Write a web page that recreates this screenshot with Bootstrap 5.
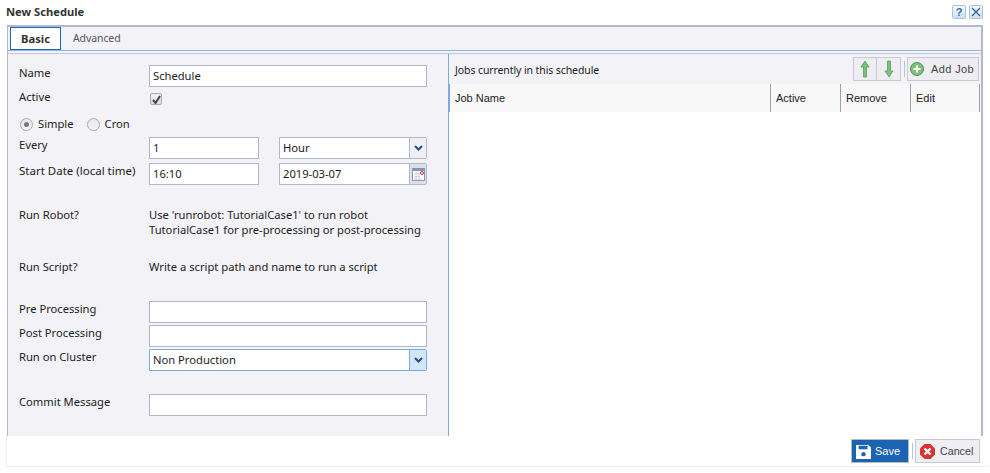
<!DOCTYPE html>
<html lang="en"><head><meta charset="utf-8"><title>New Schedule</title>
<link href="https://cdn.jsdelivr.net/npm/bootstrap@5.3.0/dist/css/bootstrap.min.css" rel="stylesheet">
<style>
html,body{height:473px;overflow:hidden;background:#fff}
body{font:11.2px/16px "Noto Sans","Open Sans",sans-serif;color:#1c1c1c;}
.dlg{height:473px;padding:0 7px 6px 7px;width:990px}
.dlg-head{height:25px;padding-top:4px}
.dlg-title{font-weight:700;font-size:11.2px;color:#333;margin-left:-1px}
.hbtn{width:14px;height:14px;margin-top:1px;border:1px solid #a9c2de;background:linear-gradient(#f3f8fd,#cfe2f5);border-radius:2px;margin-left:3px;display:flex;align-items:center;justify-content:center;color:#2e6da4;font:700 11px/1 "Liberation Sans",sans-serif}
.frame{height:411px;border:1px solid #b4b8d0;border-bottom:0;background:#f2f2f7;border-top-width:2px;border-right-width:2px;overflow:hidden}
.tabbar{height:24px;border-bottom:1px solid #8db4e2;box-shadow:0 2px 0 #f2f2f7,0 3px 0 #c3c6da;padding:0 0 0 2px;gap:12px;flex:none}
.tab1{height:23px;width:51px;border:1px solid #1b6ab5;background:#fff;font-weight:700;text-align:center;line-height:21px;color:#333;font-size:11.2px}
.tab2{line-height:23px;color:#555;font-size:10.5px;letter-spacing:-.1px}
.panes{height:384px;margin-top:3px}
.leftp{width:441px;flex:none;border-right:1px solid #7fa9dc;padding:11px 0 0 11px}
.frow{display:flex;margin-bottom:2px;height:22px}
.frow .lb{width:130px;flex:none}
.wide{font-size:11.5px}
.finp{height:22px;border:1px solid #b3b6cf;background:#fff;padding:0 3px;line-height:20px;overflow:hidden}
.w278{width:278px}.w110{width:110px}.w148{width:148px}
.g20{gap:20px;display:flex}
.sel{display:flex;height:22px;border:1px solid #b3b6cf;background:#fff;border-radius:0 2px 2px 0}
.sel>span{flex:1;padding:0 3px;line-height:20px}
.arr{width:17px;border-left:1px solid #b3b6cf;background:#eef0f6;display:flex;align-items:center;justify-content:center;flex:none}
.arr.cal{background:#dcdee8}
.sel.on{border-color:#7fa9dc}.sel.on .arr{background:#d2e6fa;border-left-color:#7fa9dc}
.chk{width:12px;height:12px;border:1px solid #aaa;border-radius:2px;background:linear-gradient(#f2f2f2,#dcdcdc);margin:4px 0 0 1px;display:flex;align-items:center;justify-content:center}
.rad{width:13px;height:13px;border:1px solid #aaa;border-radius:50%;background:linear-gradient(#e6e6e6,#f6f6f6);display:inline-block;position:relative}
.rad.on::after{content:"";position:absolute;inset:3px;border-radius:50%;background:#777}
.radios{height:24px;padding:0 0 2px 1px;gap:5px}
.rad-gap{margin-right:8px}
.tight{margin-bottom:4px}
.lbw{width:130px;flex:none}
.info1{margin-top:22px;height:38px;line-height:15px}
.info1 .lbw{line-height:16px}
.info2{margin-top:14px;height:26px}
.pre{margin-top:16px}
.commit{margin-top:23px}
.rightp{flex:1;min-width:0;background:#fff}
.rhead{height:30px;background:#f2f2f7;padding:0 2px 0 6px}
.rhead .cap{font-size:10.5px;letter-spacing:-.1px;padding-top:1px}
.tool{height:24px;border:1px solid #c8c8d0;background:#eeeef2;display:flex;align-items:center;justify-content:center}
.wt{width:24px}.nb{border-left:0}
.sep{width:1px;height:16px;background:#a9c7e8;margin:0 2px 0 3px}
.addj{width:72px;gap:7px;padding-right:2px;color:#444;font:11px "Liberation Sans",sans-serif;letter-spacing:.4px}
.thead{height:28px;background:#f8f8f8;font:11px/28px "Liberation Sans",sans-serif;color:#222;display:flex}
.thead div{border-left:1px solid #a0a0a8;padding-left:5px}
.thead .c1{width:321px;border-left-color:#7fa9dc}
.c2{width:70px}.thead .last{border-right:1px solid #a0a0a8}
.foot{height:31px;padding-right:9px;border-bottom:1px solid #eee;border-left:1px solid #eee;margin-left:-1px;margin-right:-6px}
.bsave,.bcancel{height:24px;display:flex;align-items:center;font:11px "Liberation Sans",sans-serif}
.bsave{width:58px;background:#1b63b3;color:#fff;border:1px solid #bbb;gap:4px;padding-left:4px}
.bcancel{width:65px;background:#eeeef3;color:#444;border:1px solid #c8c8d0;gap:5px;padding-left:4px;font-size:10.7px}
</style></head><body>
<div class="dlg">
 <div class="dlg-head d-flex justify-content-between">
  <div class="dlg-title">New Schedule</div>
  <div class="d-flex me-0">
   <div class="hbtn">?</div>
   <div class="hbtn"><svg width="10" height="10" viewBox="0 0 10 10"><path d="M1 1l8 8M9 1l-8 8" stroke="#2e5f96" stroke-width="1.200"/></svg></div>
  </div>
 </div>
 <div class="frame d-flex flex-column">
  <div class="tabbar d-flex"><div class="tab1">Basic</div><div class="tab2">Advanced</div></div>
  <div class="panes d-flex">
   <div class="leftp">
    <div class="frow"><div class="lb">Name</div><div class="finp w278">Schedule</div></div>
    <div class="frow"><div class="lb">Active</div><div class="chk"><svg width="9" height="9" viewBox="0 0 9 9"><path d="M1 5l2.500 3L8 1" fill="none" stroke="#444" stroke-width="2"/></svg></div></div>
    <div class="radios d-flex align-items-center"><span class="rad on"></span><span class="rad-gap">Simple</span><span class="rad"></span><span>Cron</span></div>
    <div class="frow tight"><div class="lb">Every</div><div class="g20"><div class="finp w110">1</div><div class="sel w148"><span>Hour</span><div class="arr"><svg width="9" height="6" viewBox="0 0 9 6"><path d="M1 1l3.500 3.500L8 1" fill="none" stroke="#2d4a80" stroke-width="2"/></svg></div></div></div></div>
    <div class="frow"><div class="lb wide">Start Date (local time)</div><div class="g20"><div class="finp w110">16:10</div><div class="sel w148"><span>2019-03-07</span><div class="arr cal"><svg width="13" height="13" viewBox="0 0 13 13"><rect x=".5" y=".5" width="12" height="12" fill="#fff" stroke="#8a94ad"/><rect x="1" y="1" width="11" height="2" fill="#8a94ad"/><path d="M2 6h6M2 8.500h6M2 11h8M4 4v8M7 4v8" stroke="#c5cbdb" stroke-width=".8"/><circle cx="10" cy="5" r="1.500" fill="#fff" stroke="#b33"/></svg></div></div></div></div>
    <div class="d-flex info1"><div class="lbw">Run Robot?</div><div class="text-nowrap">Use 'runrobot: TutorialCase1' to run robot<br>TutorialCase1 for pre-processing or post-processing</div></div>
    <div class="d-flex info2"><div class="lbw">Run Script?</div><div>Write a script path and name to run a script</div></div>
    <div class="frow pre"><div class="lb">Pre Processing</div><div class="finp w278"></div></div>
    <div class="frow"><div class="lb">Post Processing</div><div class="finp w278"></div></div>
    <div class="frow"><div class="lb">Run on Cluster</div><div class="sel on w278"><span>Non Production</span><div class="arr"><svg width="9" height="6" viewBox="0 0 9 6"><path d="M1 1l3.500 3.500L8 1" fill="none" stroke="#2d4a80" stroke-width="2"/></svg></div></div></div>
    <div class="frow commit"><div class="lb">Commit Message</div><div class="finp w278"></div></div>
   </div>
   <div class="rightp">
    <div class="rhead d-flex align-items-center justify-content-between">
     <div class="cap">Jobs currently in this schedule</div>
     <div class="d-flex align-items-center">
      <div class="tool wt"><svg width="10" height="18" viewBox="0 0 10 18"><path d="M5 1L1 7h2.500v10h3V7H9z" fill="#7cc27c" stroke="#3b8a3b" stroke-width=".6"/></svg></div>
      <div class="tool wt nb"><svg width="10" height="18" viewBox="0 0 10 18"><path d="M5 17L1 11h2.500V1h3v10H9z" fill="#7cc27c" stroke="#3b8a3b" stroke-width=".6"/></svg></div>
      <div class="sep"></div>
      <div class="tool addj"><svg width="14" height="14" viewBox="0 0 14 14"><circle cx="7" cy="7" r="6.500" fill="#7cc07c" stroke="#4a944a"/><path d="M7 3.500v7M3.500 7h7" stroke="#fff" stroke-width="2"/></svg>Add Job</div>
     </div>
    </div>
    <div class="thead"><div class="c1">Job Name</div><div class="c2">Active</div><div class="c2">Remove</div><div class="c2 last">Edit</div></div>
   </div>
  </div>
 </div>
 <div class="foot d-flex justify-content-end align-items-center">
  <div class="bsave"><svg width="15" height="15" viewBox="0 0 17 17"><path d="M0 1h14l3 3v13H0z" fill="#fff"/><rect x="3" y="2" width="10" height="4" fill="#1b63b3"/><circle cx="8.500" cy="11.500" r="2.500" fill="#1b63b3"/></svg>Save</div>
  <div class="sep"></div>
  <div class="bcancel"><svg width="15" height="15" viewBox="0 0 15 15"><path d="M4.500 0h6L15 4.500v6L10.500 15h-6L0 10.500v-6z" fill="#d9342f"/><path d="M4.500 4.500l6 6M10.500 4.500l-6 6" stroke="#fff" stroke-width="2.400"/></svg>Cancel</div>
 </div>
</div>
</body></html>
